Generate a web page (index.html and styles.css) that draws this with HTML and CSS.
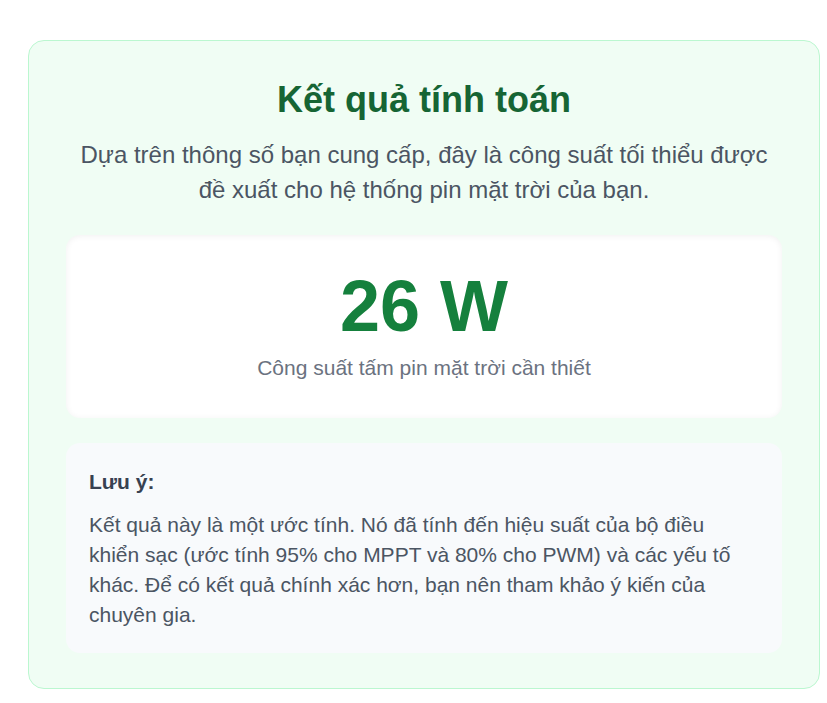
FILE: index.html
```html
<!DOCTYPE html>
<html lang="vi">
<head>
    <meta charset="utf-8">
    <title>Kết quả tính toán</title>
    <meta name="viewport" content="width=device-width, initial-scale=1">
    <link rel="stylesheet" href="styles.css">
</head>
<body>
    <div class="result-card">
        <h2 class="result-title">Kết quả tính toán</h2>
        <p class="result-desc">Dựa trên thông số bạn cung cấp, đây là công suất tối thiểu được đề xuất cho hệ thống pin mặt trời của bạn.</p>

        <div class="power-box">
            <div class="power-value">26 W</div>
            <div class="power-label">Công suất tấm pin mặt trời cần thiết</div>
        </div>

        <div class="note-box">
            <div class="note-title">Lưu ý:</div>
            <p class="note-text">Kết quả này là một ước tính. Nó đã tính đến hiệu suất của bộ điều khiển sạc (ước tính 95% cho MPPT và 80% cho PWM) và các yếu tố khác. Để có kết quả chính xác hơn, bạn nên tham khảo ý kiến của chuyên gia.</p>
        </div>
    </div>
</body>
</html>
```
FILE: styles.css
```css
* {
    box-sizing: border-box;
}

body {
    margin: 0;
    padding: 40px 7px 14px 28px;
    background-color: #ffffff;
    font-family: "Liberation Sans", Arial, sans-serif;
}

.result-card {
    width: 792px;
    background-color: #f0fdf4;
    border: 1px solid #bbf7d0;
    border-radius: 16px;
    padding: 39px 37px 35px 37px;
}

.result-title {
    margin: 0;
    text-align: center;
    font-size: 36px;
    line-height: 40px;
    font-weight: bold;
    color: #166534;
}

.result-desc {
    margin: 18px 0 0 0;
    text-align: center;
    font-size: 24px;
    line-height: 34.5px;
    color: #4b5563;
}

.power-box {
    margin-top: 28px;
    background-color: #ffffff;
    border-radius: 14px;
    padding: 35px 24px;
    text-align: center;
    box-shadow: inset 0 1px 6px rgba(0, 0, 0, 0.06);
}

.power-value {
    font-size: 72px;
    line-height: 72px;
    font-weight: bold;
    color: #15803d;
}

.power-label {
    margin-top: 11px;
    font-size: 21px;
    line-height: 30px;
    color: #6b7280;
}

.note-box {
    margin-top: 25px;
    background-color: #f8fafc;
    border-radius: 14px;
    padding: 24px 24px 23px 23px;
}

.note-title {
    font-size: 21px;
    line-height: 30px;
    font-weight: bold;
    color: #374151;
}

.note-text {
    margin: 13px 0 0 0;
    font-size: 21px;
    line-height: 30px;
    color: #4b5563;
}
```
